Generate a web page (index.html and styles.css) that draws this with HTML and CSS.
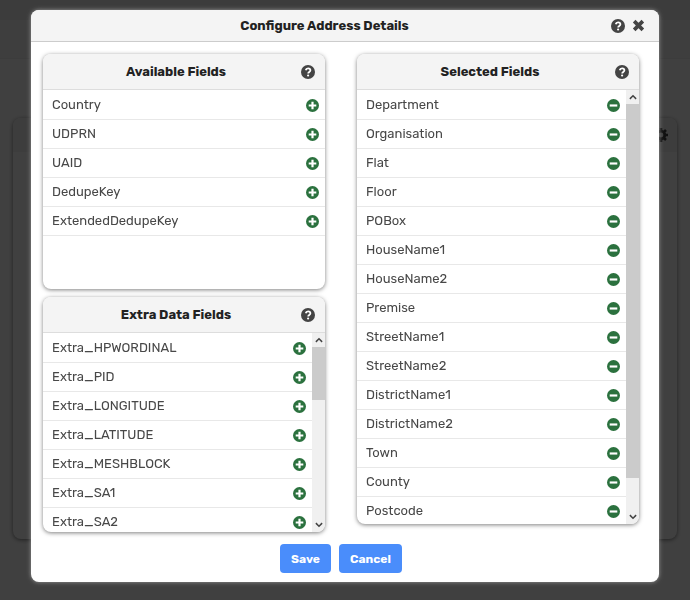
FILE: index.html
```html
<!DOCTYPE html>
<html lang="en">
<head>
  <title>Configure Address Details</title>
  <meta charset="utf-8">
  <meta name="viewport" content="width=device-width, initial-scale=1">
  <link rel="stylesheet" href="styles.css">
</head>
<body>
<!-- shared icons -->
<svg class="sprite" aria-hidden="true">
  <symbol id="help" viewBox="0 0 14 14">
    <circle cx="7" cy="7" r="7" fill="currentColor"/>
    <path d="M4.7 5.2C5 4 5.9 3.3 7.1 3.3c1.3 0 2.3.8 2.3 2 0 1.7-2.2 1.6-2.2 3.1" fill="none" stroke="#fff" stroke-width="1.8"/>
    <circle cx="7.1" cy="10.5" r="1.1" fill="#fff"/>
  </symbol>
  <symbol id="close" viewBox="0 0 12 12">
    <path d="M2 2l8 8M10 2l-8 8" stroke="currentColor" stroke-width="3.4"/>
  </symbol>
  <symbol id="plus" viewBox="0 0 12 12">
    <circle cx="6" cy="6" r="6" fill="currentColor"/>
    <path d="M6 2.5v7M2.5 6h7" stroke="#fff" stroke-width="2"/>
  </symbol>
  <symbol id="minus" viewBox="0 0 12 12">
    <circle cx="6" cy="6" r="6" fill="currentColor"/>
    <path d="M2.5 6h7" stroke="#fff" stroke-width="2"/>
  </symbol>
  <symbol id="up" viewBox="0 0 8 8">
    <path d="M1.5 5.5L4 3l2.5 2.5" fill="none" stroke="currentColor" stroke-width="1.2"/>
  </symbol>
  <symbol id="down" viewBox="0 0 8 8">
    <path d="M1.5 2.5L4 5l2.5-2.5" fill="none" stroke="currentColor" stroke-width="1.2"/>
  </symbol>
  <symbol id="gear" viewBox="0 0 14 14">
    <circle cx="7" cy="7" r="3.8" fill="none" stroke="currentColor" stroke-width="2.8"/>
    <path d="M7 0v3M7 11v3M0 7h3M11 7h3M2 2l2.2 2.2M9.8 9.8L12 12M12 2L9.8 4.2M4.2 9.8L2 12" stroke="currentColor" stroke-width="2.6"/>
  </symbol>
</svg>

<div class="page">
  <div class="topbar"></div>
  <div class="subbar"></div>
  <div class="card">
    <div class="card-header">
      <button class="icon-button" aria-label="Settings"><svg class="icon"><use href="#gear"/></svg></button>
    </div>
  </div>
</div>

<div class="overlay">
  <div class="modal" role="dialog" aria-labelledby="modal-title">
    <div class="modal-header">
      <h1 id="modal-title">Configure Address Details</h1>
      <button class="icon-button" aria-label="Help"><svg class="icon"><use href="#help"/></svg></button>
      <button class="icon-button" aria-label="Close"><svg class="icon icon-small"><use href="#close"/></svg></button>
    </div>

    <div class="columns">
      <div class="column">
        <section class="panel panel-short">
          <div class="panel-header">
            <h2>Available Fields</h2>
            <button class="icon-button" aria-label="Help"><svg class="icon"><use href="#help"/></svg></button>
          </div>
          <div class="panel-body">
            <ul class="fields">
              <li>Country <button class="icon-button field-button" aria-label="Add"><svg class="icon icon-small"><use href="#plus"/></svg></button></li>
              <li>UDPRN <button class="icon-button field-button" aria-label="Add"><svg class="icon icon-small"><use href="#plus"/></svg></button></li>
              <li>UAID <button class="icon-button field-button" aria-label="Add"><svg class="icon icon-small"><use href="#plus"/></svg></button></li>
              <li>DedupeKey <button class="icon-button field-button" aria-label="Add"><svg class="icon icon-small"><use href="#plus"/></svg></button></li>
              <li>ExtendedDedupeKey <button class="icon-button field-button" aria-label="Add"><svg class="icon icon-small"><use href="#plus"/></svg></button></li>
            </ul>
          </div>
        </section>

        <section class="panel panel-short">
          <div class="panel-header">
            <h2>Extra Data Fields</h2>
            <button class="icon-button" aria-label="Help"><svg class="icon"><use href="#help"/></svg></button>
          </div>
          <div class="panel-body">
            <ul class="fields">
              <li>Extra_HPWORDINAL <button class="icon-button field-button" aria-label="Add"><svg class="icon icon-small"><use href="#plus"/></svg></button></li>
              <li>Extra_PID <button class="icon-button field-button" aria-label="Add"><svg class="icon icon-small"><use href="#plus"/></svg></button></li>
              <li>Extra_LONGITUDE <button class="icon-button field-button" aria-label="Add"><svg class="icon icon-small"><use href="#plus"/></svg></button></li>
              <li>Extra_LATITUDE <button class="icon-button field-button" aria-label="Add"><svg class="icon icon-small"><use href="#plus"/></svg></button></li>
              <li>Extra_MESHBLOCK <button class="icon-button field-button" aria-label="Add"><svg class="icon icon-small"><use href="#plus"/></svg></button></li>
              <li>Extra_SA1 <button class="icon-button field-button" aria-label="Add"><svg class="icon icon-small"><use href="#plus"/></svg></button></li>
              <li>Extra_SA2 <button class="icon-button field-button" aria-label="Add"><svg class="icon icon-small"><use href="#plus"/></svg></button></li>
            </ul>
            <div class="scrollbar" aria-hidden="true">
              <svg class="arrow"><use href="#up"/></svg>
              <div class="track"><div class="thumb" style="height: 31%"></div></div>
              <svg class="arrow"><use href="#down"/></svg>
            </div>
          </div>
        </section>
      </div>

      <div class="column">
        <section class="panel panel-tall">
          <div class="panel-header">
            <h2>Selected Fields</h2>
            <button class="icon-button" aria-label="Help"><svg class="icon"><use href="#help"/></svg></button>
          </div>
          <div class="panel-body">
            <ul class="fields">
              <li>Department <button class="icon-button field-button" aria-label="Remove"><svg class="icon icon-small"><use href="#minus"/></svg></button></li>
              <li>Organisation <button class="icon-button field-button" aria-label="Remove"><svg class="icon icon-small"><use href="#minus"/></svg></button></li>
              <li>Flat <button class="icon-button field-button" aria-label="Remove"><svg class="icon icon-small"><use href="#minus"/></svg></button></li>
              <li>Floor <button class="icon-button field-button" aria-label="Remove"><svg class="icon icon-small"><use href="#minus"/></svg></button></li>
              <li>POBox <button class="icon-button field-button" aria-label="Remove"><svg class="icon icon-small"><use href="#minus"/></svg></button></li>
              <li>HouseName1 <button class="icon-button field-button" aria-label="Remove"><svg class="icon icon-small"><use href="#minus"/></svg></button></li>
              <li>HouseName2 <button class="icon-button field-button" aria-label="Remove"><svg class="icon icon-small"><use href="#minus"/></svg></button></li>
              <li>Premise <button class="icon-button field-button" aria-label="Remove"><svg class="icon icon-small"><use href="#minus"/></svg></button></li>
              <li>StreetName1 <button class="icon-button field-button" aria-label="Remove"><svg class="icon icon-small"><use href="#minus"/></svg></button></li>
              <li>StreetName2 <button class="icon-button field-button" aria-label="Remove"><svg class="icon icon-small"><use href="#minus"/></svg></button></li>
              <li>DistrictName1 <button class="icon-button field-button" aria-label="Remove"><svg class="icon icon-small"><use href="#minus"/></svg></button></li>
              <li>DistrictName2 <button class="icon-button field-button" aria-label="Remove"><svg class="icon icon-small"><use href="#minus"/></svg></button></li>
              <li>Town <button class="icon-button field-button" aria-label="Remove"><svg class="icon icon-small"><use href="#minus"/></svg></button></li>
              <li>County <button class="icon-button field-button" aria-label="Remove"><svg class="icon icon-small"><use href="#minus"/></svg></button></li>
              <li>Postcode <button class="icon-button field-button" aria-label="Remove"><svg class="icon icon-small"><use href="#minus"/></svg></button></li>
            </ul>
            <div class="scrollbar" aria-hidden="true">
              <svg class="arrow"><use href="#up"/></svg>
              <div class="track"><div class="thumb" style="height: 92%"></div></div>
              <svg class="arrow"><use href="#down"/></svg>
            </div>
          </div>
        </section>
      </div>
    </div>

    <div class="modal-footer">
      <button class="button">Save</button>
      <button class="button">Cancel</button>
    </div>
  </div>
</div>
</body>
</html>
```
FILE: styles.css
```css
* {
    box-sizing: border-box;
}

body {
    margin: 0;
    font-family: Rubik, Roboto, "Liberation Sans", sans-serif;
    font-size: 13px;
    line-height: 18px;
    color: #484848;
}

h1, h2 {
    flex: auto;
    margin: 0;
    font-size: 13px;
    font-weight: 700;
    text-align: center;
    color: #222;
}

.sprite {
    display: none;
}

.icon {
    display: block;
    width: 14px;
    height: 14px;
}

.icon-small {
    width: 13px;
    height: 13px;
}

.icon-button {
    flex: none;
    padding: 0;
    border: 0;
    background: none;
    color: #444;
}

/* page behind the dialog */
.page {
    display: flex;
    flex-direction: column;
    height: 100vh;
    background: #fff;
}

.topbar {
    height: 20px;
    background: #eee;
}

.subbar {
    height: 39px;
    background: #f8f8f8;
    border-bottom: 1px solid #eee;
}

.card {
    flex: auto;
    margin: 59px 13px 61px;
    border-radius: 8px;
    box-shadow: 0 1px 4px rgba(0, 0, 0, 0.5);
}

.card-header {
    display: flex;
    justify-content: flex-end;
    height: 34px;
    padding: 10px 9px;
    border-radius: 8px 8px 0 0;
    background: #f4f4f4;
}

/* dialog */
.overlay {
    position: fixed;
    inset: 0;
    padding: 10px 31px;
    background: rgba(0, 0, 0, 0.75);
}

.modal {
    border-radius: 8px;
    background: #fff;
    box-shadow: 0 0 4px #999;
    overflow: hidden;
}

.modal-header {
    display: flex;
    align-items: center;
    gap: 7px;
    height: 32px;
    padding: 0 14px;
    border-bottom: 1px solid #ccc;
    background: #f4f4f4;
}

.columns {
    display: grid;
    grid-template-columns: 1fr 1fr;
    gap: 32px;
    padding: 12px 20px 12px 12px;
}

.column {
    display: flex;
    flex-direction: column;
    gap: 8px;
}

.panel {
    display: flex;
    flex-direction: column;
    border-radius: 8px;
    background: #fff;
    box-shadow: 0 1px 4px rgba(0, 0, 0, 0.5);
    overflow: hidden;
}

.panel-short {
    height: 235px;
}

.panel-tall {
    height: 470px;
}

.panel-header {
    display: flex;
    flex: none;
    align-items: center;
    height: 36px;
    padding: 0 10px 0 8px;
    border-bottom: 1px solid #ddd;
    background: #f4f4f4;
}

.panel-body {
    display: flex;
    flex: auto;
    min-height: 0;
}

.fields {
    flex: auto;
    margin: 0;
    padding: 1px 0 0;
    list-style: none;
    overflow: hidden;
}

.fields li {
    display: flex;
    align-items: center;
    justify-content: space-between;
    height: 29px;
    padding: 0 6px 0 9px;
    border-bottom: 1px solid #e8e8e8;
}

.field-button {
    color: #2b713e;
}

.scrollbar {
    display: flex;
    flex: none;
    flex-direction: column;
    align-items: center;
    width: 13px;
    background: #f0f0f0;
}

.arrow {
    flex: none;
    width: 10px;
    height: 14px;
    color: #444;
}

.track {
    flex: auto;
    align-self: stretch;
}

.thumb {
    background: #cbcbcb;
}

.modal-footer {
    display: flex;
    justify-content: center;
    gap: 8px;
    padding: 0 16px 9px 8px;
}

.button {
    height: 29px;
    padding: 0 11px;
    border: 0;
    border-radius: 4px;
    background: #4a8dfb;
    color: #fff;
    font-family: inherit;
    font-size: 12px;
    font-weight: 700;
}
```
